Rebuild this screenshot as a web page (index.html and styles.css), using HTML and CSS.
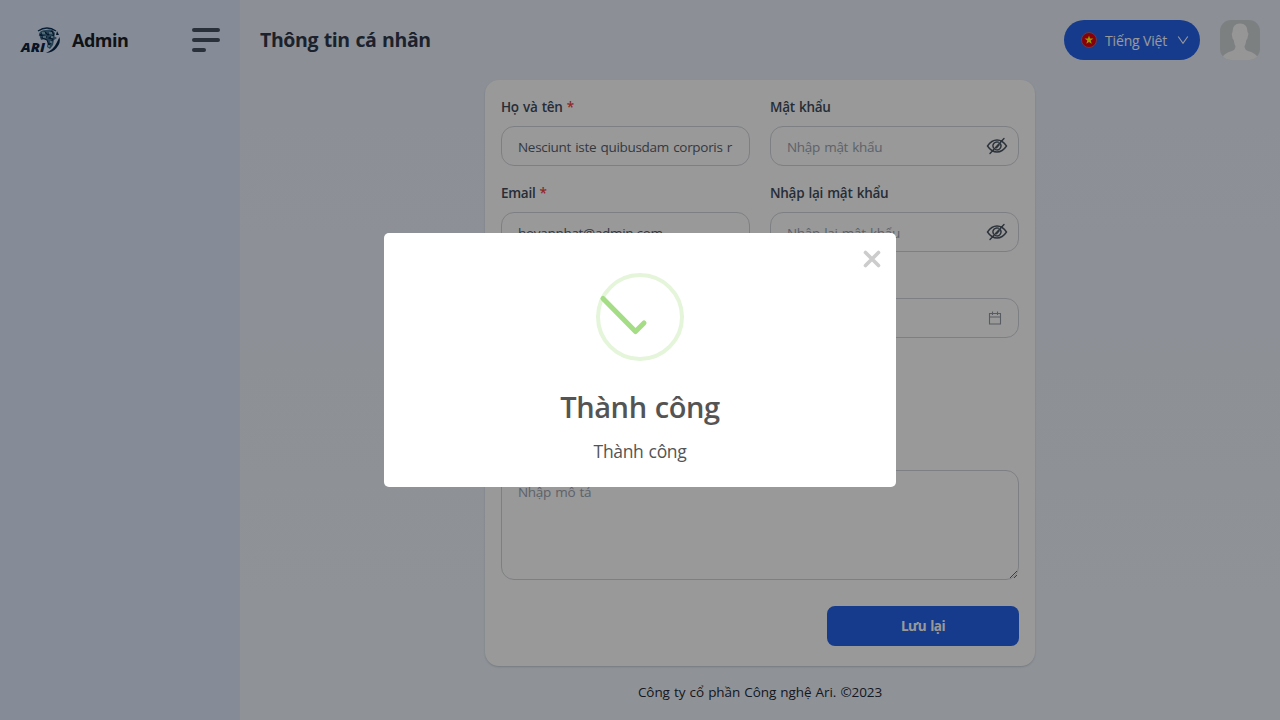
FILE: index.html
```html
<!DOCTYPE html>
<html lang="vi">
<head>
<meta charset="utf-8">
<title>Thông tin cá nhân</title>
<link rel="stylesheet" href="styles.css">
</head>
<body>
<div class="app">
  <aside class="sidebar">
    <div class="brand">
      <svg class="logo" width="42" height="28" viewBox="0 0 42 28">
        <path d="M18 5Q27-1 36 5" fill="none" stroke="#0c3257" stroke-width="1.4"/>
        <path d="M37 5L39 9L36 9ZM39.500 11Q41 17 36.500 22Q33 26.500 26 27Q34 23 36.500 17Z" fill="#0b2949"/>
        <path d="M19 8Q20 4 26 4Q32 2 35 7L34 10L37 12L34 14L33 19L30 23L27 21L28 15L25 13L21 14Z" fill="#44708f"/>
        <path d="M20 9L25 6L28 9L32 5L34 9L29 12L33 13L29 19L27 14L22 12L27 11Z" fill="none" stroke="#0b2949" stroke-width="1.1"/>
        <path d="M22 7h3M29 7h3M23 11h3M31 11h2M30 16h2M28 20h2" stroke="#a6d2e0" stroke-width="1.3"/>
        <text class="logo-text" x="1" y="26" textLength="24" lengthAdjust="spacingAndGlyphs">ARI</text>
      </svg>
      <span class="brand-name">Admin</span>
    </div>
    <div class="burger"><i></i><i></i><i class="short"></i></div>
  </aside>
  <div class="main">
    <header class="topbar">
      <h1 class="page-title">Thông tin cá nhân</h1>
      <div class="actions">
        <button class="lang">
          <svg width="16" height="16" viewBox="0 0 16 16"><circle cx="8" cy="8" r="7.5" fill="#e3000f" stroke="#a8647a"/><path d="M8 3.500l1.100 3.100h3.300L9.700 8.600l1 3.200L8 9.900l-2.700 1.900 1-3.200-2.700-2h3.300z" fill="#ff0"/></svg>
          <span class="lang-name">Tiếng Việt</span>
          <svg class="chev" width="12" height="10" viewBox="0 0 12 10"><path d="M1.200 1.500L6 8.200L10.800 1.500" fill="none" stroke="#fff" stroke-width="1.1"/></svg>
        </button>
        <svg class="avatar" width="40" height="40" viewBox="0 0 40 40"><rect width="40" height="40" fill="#d1d5d8"/><path d="M20 3.500Q27.500 3.500 27.500 12Q29 13 28 16Q27.500 19 26.300 20Q25.500 25 24.500 26Q24.500 30 28 31Q36 33 40 40H0Q4 33 12 31Q15.500 30 15.500 26Q14.500 25 13.700 20Q12.500 19 12 16Q11.500 13 12.500 12Q12.500 3.500 20 3.500Z" fill="#fafafa"/></svg>
      </div>
    </header>
    <form class="card">
      <div class="grid">
        <div class="field"><label class="label">Họ và tên <b class="req">*</b></label><input class="input" value="Nesciunt iste quibusdam corporis r"></div>
        <div class="field"><label class="label">Mật khẩu</label>
          <div class="control"><input class="input" placeholder="Nhập mật khẩu">
            <svg class="eye" width="22" height="20" viewBox="0 0 22 20"><path d="M1.500 10Q5.500 4 11 4T20.500 10Q16.500 16 11 16T1.500 10ZM18 2.500L4 17.500M14.200 7.500A4 4 0 0 1 9.500 13.600M7.400 11.800A4 4 0 0 1 12.300 6.200M13 9L10.500 11.800"/></svg></div></div>
        <div class="field"><label class="label">Email <b class="req">*</b></label><input class="input" value="hovannhat@admin.com"></div>
        <div class="field"><label class="label">Nhập lại mật khẩu</label>
          <div class="control"><input class="input" placeholder="Nhập lại mật khẩu">
            <svg class="eye" width="22" height="20" viewBox="0 0 22 20"><path d="M1.500 10Q5.500 4 11 4T20.500 10Q16.500 16 11 16T1.500 10ZM18 2.500L4 17.500M14.200 7.500A4 4 0 0 1 9.500 13.600M7.400 11.800A4 4 0 0 1 12.300 6.200M13 9L10.500 11.800"/></svg></div></div>
        <div class="field"><label class="label"></label><input class="input"></div>
        <div class="field"><label class="label"></label>
          <div class="control"><input class="input">
            <svg class="calendar" width="14" height="14" viewBox="0 0 14 14"><path d="M1.500 2.500h11v10.500h-11zM1.500 6h11M4.500 .5v3.500M9.500 .5v3.500"/></svg></div></div>
        <div class="field"><label class="label"></label><input class="input"></div>
      </div>
      <textarea class="input area" placeholder="Nhập mô tả"></textarea>
      <div class="submit-row"><button class="submit" type="button">Lưu lại</button></div>
    </form>
    <footer class="footer"><span>Công ty cổ phần Công nghệ Ari. ©2023</span></footer>
  </div>
</div>
<div class="backdrop">
  <div class="modal">
    <svg class="close" width="18" height="18" viewBox="0 0 18 18"><path d="M2.500 2.500L15.500 15.500M15.500 2.500L2.500 15.500" stroke="#ccc" stroke-width="3.600" stroke-linecap="round"/></svg>
    <svg width="88" height="88" viewBox="0 0 88 88"><circle cx="44" cy="44" r="42" fill="none" stroke="#e4f5da" stroke-width="4"/><path d="M7 25.500L39.500 58.500L48 50" fill="none" stroke="#a5dc86" stroke-width="5" stroke-linecap="round" stroke-linejoin="round"/></svg>
    <h2 class="modal-title">Thành công</h2>
    <p class="modal-text">Thành công</p>
  </div>
</div>
</body>
</html>
```
FILE: styles.css
```css
* { box-sizing: border-box; }
body { margin: 0; overflow: hidden; font: 14px/22px "Open Sans", "Noto Sans", sans-serif; color: #1f2937; }
h1, h2, p { margin: 0; }
svg { display: block; flex: none; overflow: visible; }
.app { display: flex; width: 1280px; height: 720px; background: linear-gradient(180deg, #e9effa, #eff5fc); }
.sidebar { display: flex; justify-content: space-between; align-items: flex-start; width: 240px; padding: 26px 20px; background: #deeafd; }
.brand { display: flex; align-items: center; gap: 10px; height: 28px; }
.logo-text { font: italic 800 13px "Open Sans", sans-serif; fill: #0b2343; }
.brand-name { font-size: 18px; font-weight: 700; color: #1b1f28; letter-spacing: -.5px; }
.burger { display: flex; flex-direction: column; gap: 6px; width: 28px; padding-top: 2px; }
.burger i { height: 4px; border-radius: 2px; background: #475161; }
.burger .short { width: 14px; }
.main { flex: 1; display: flex; flex-direction: column; align-items: center; }
.topbar { display: flex; align-items: center; justify-content: space-between; align-self: stretch; height: 80px; padding: 0 20px; }
.page-title { font-size: 19.5px; line-height: 28px; font-weight: 700; color: #303a4b; letter-spacing: -.4px; word-spacing: 1px; }
.actions { display: flex; align-items: center; gap: 20px; }
.lang { display: flex; align-items: center; width: 136px; height: 40px; padding: 0 11px 0 17px; border: 0; border-radius: 20px; background: #2563eb; color: #fff; font: inherit; }
.lang-name { margin-left: 8px; padding-top: 2px; white-space: nowrap; letter-spacing: -.15px; }
.chev { margin-left: auto; }
.avatar { border-radius: 11px; overflow: hidden; }
.card { width: 550px; height: 586px; padding: 16px; border-radius: 14px; background: #fff; box-shadow: 0 1px 2px rgba(30, 50, 80, .2); }
.grid { display: grid; grid-template-columns: 249px 249px; gap: 16px 20px; }
.field { height: 70px; }
.label { display: block; height: 30px; font-size: 13.5px; font-weight: 600; color: #404b5c; letter-spacing: -.28px; word-spacing: 1px; }
.req { font-weight: 600; color: #ef4444; }
.control { position: relative; }
.input { display: block; width: 100%; height: 40px; padding: 1px 15px 0 16px; border: 1px solid #d1d5db; border-radius: 13px; background: #fff; font: inherit; font-size: 13.5px; color: #58606d; letter-spacing: -.3px; word-spacing: 1px; outline: 0; }
.input::placeholder { color: #9ca3af; opacity: 1; }
.eye { position: absolute; right: 11px; top: 10px; fill: none; stroke: #4b5563; stroke-width: 1.4; stroke-linecap: round; }
.calendar { position: absolute; right: 17px; top: 13px; fill: none; stroke: #9299a5; stroke-width: 1.1; }
.area { height: 110px; margin-top: 46px; padding: 10px 16px; resize: both; }
.submit-row { display: flex; justify-content: flex-end; padding-top: 26px; }
.submit { width: 192px; height: 40px; border: 0; border-radius: 8px; background: #2563eb; color: #fff; font: inherit; font-size: 13.5px; font-weight: 700; letter-spacing: -.5px; word-spacing: 1px; }
.footer { padding-top: 15px; font-size: 13.5px; letter-spacing: -.1px; word-spacing: .8px; }
.backdrop { position: fixed; inset: 0; display: flex; align-items: center; justify-content: center; background: rgba(0, 0, 0, .4); }
.modal { position: relative; display: flex; flex-direction: column; align-items: center; width: 512px; height: 254px; padding-top: 40px; border-radius: 5px; background: #fff; color: #545454; }
.close { position: absolute; top: 17px; right: 15px; }
.modal-title { margin-top: 25px; font-size: 29px; line-height: 42px; font-weight: 600; letter-spacing: -.4px; word-spacing: 1px; }
.modal-text { margin-top: 10px; font-size: 17.5px; line-height: 27px; letter-spacing: -.35px; word-spacing: 1px; }
```
